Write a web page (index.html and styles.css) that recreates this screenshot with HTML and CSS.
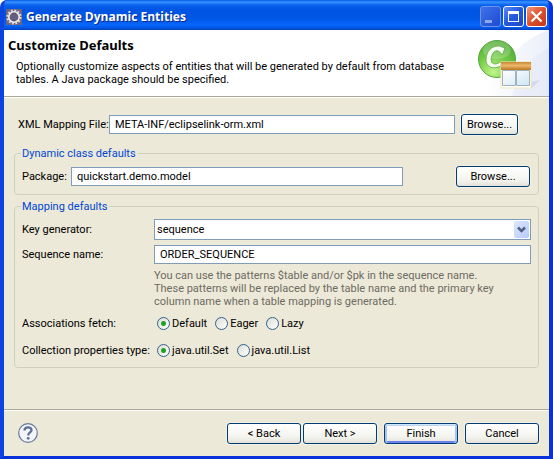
FILE: index.html
```html
<!DOCTYPE html>
<html lang="en">
<head>
<meta charset="utf-8">
<title>Generate Dynamic Entities</title>
<link rel="stylesheet" href="styles.css">
</head>
<body>
<div class="window">
  <header class="titlebar">
    <svg class="app-icon" viewBox="0 0 16 16" aria-hidden="true">
      <rect width="16" height="16" fill="#6b6284"/>
      <circle cx="8" cy="8" r="6.6" fill="none" stroke="#d4d2d2" stroke-width="2" stroke-dasharray="2 1.46"/>
      <circle cx="8" cy="8" r="5.2" fill="#5a5272" stroke="#f1efec" stroke-width="1.6"/>
      <path d="M4 8h8M4.500 6h7M4.500 10h7" stroke="#7d7694" stroke-width=".7"/>
    </svg>
    <span class="title">Generate Dynamic Entities</span>
    <button class="caption-btn minimize" type="button" aria-label="Minimize">
      <svg viewBox="0 0 21 21"><path d="M5 14h7v3H5z" fill="#8fa9ee"/></svg>
    </button>
    <button class="caption-btn" type="button" aria-label="Maximize">
      <svg viewBox="0 0 21 21"><path d="M5 5h11v11H5zM6 8v7h9V8z" fill="#fff" fill-rule="evenodd"/></svg>
    </button>
    <button class="caption-btn close" type="button" aria-label="Close">
      <svg viewBox="0 0 21 21"><path d="M5.500 5.500l10 10M15.500 5.500l-10 10" stroke="#fff" stroke-width="2.200"/></svg>
    </button>
  </header>

  <main class="client">
    <section class="banner">
      <div class="banner-text">
        <h1>Customize Defaults</h1>
        <p>Optionally customize aspects of entities that will be generated by default from database<br>tables. A Java package should be specified.</p>
      </div>
      <svg class="banner-art" viewBox="0 0 75 66" aria-hidden="true">
        <defs>
          <radialGradient id="ball" cx=".4" cy=".85" r=".9">
            <stop offset="0" stop-color="#c2f58a"/><stop offset=".5" stop-color="#74cb48"/><stop offset="1" stop-color="#4aa634"/>
          </radialGradient>
          <linearGradient id="wash" x1="0" y1="0" x2="1" y2="0">
            <stop offset="0" stop-color="#fff"/><stop offset="1" stop-color="#e3e8f7"/>
          </linearGradient>
          <linearGradient id="wood" x1="0" y1="0" x2="0" y2="1">
            <stop offset="0" stop-color="#c98632"/><stop offset=".45" stop-color="#edb868"/><stop offset="1" stop-color="#b87424"/>
          </linearGradient>
          <linearGradient id="pane" x1="0" y1="0" x2="1" y2="1">
            <stop offset="0" stop-color="#fff"/><stop offset="1" stop-color="#cfe6f5"/>
          </linearGradient>
        </defs>
        <path d="M75 0C50 8 28 30 10 66h65z" fill="url(#wash)" opacity=".7"/>
        <path d="M75 18C58 26 44 44 38 66h37z" fill="#dfe5f6" opacity=".45"/>
        <path d="M30 58L56 52 66 50 58 58z" fill="#8791b8" opacity=".2"/>
        <circle cx="23" cy="29" r="18.500" fill="url(#ball)" stroke="#58a53c"/>
        <ellipse cx="23" cy="20" rx="14" ry="9" fill="#fff" opacity=".2"/>
        <path d="M31 17L29 24L26.500 24C26 20 21 19.500 18.500 24C16 29 17 34 21 34C23 34 25 33 27 31.500V36C19 40 12 37 12 30C12 21 18 16 24 16C26 16 27.500 16.500 28.500 17.500Z" fill="#f6fff0" stroke="#5aa844" stroke-width=".8"/>
        <rect x="27" y="32" width="30" height="26" fill="#fff" stroke="#efe8b8"/>
        <rect x="27" y="32" width="30" height="8" fill="url(#wood)"/>
        <path d="M28.500 40.500h13v15h-13zM42.500 40.500h13v15h-13z" fill="url(#pane)" stroke="#9fb2bd"/>
      </svg>
    </section>

    <form class="page">
      <div class="row file-row">
        <label for="xml">XML Mapping File:</label>
        <input class="text" id="xml" type="text" value="META-INF/eclipselink-orm.xml">
        <button class="btn narrow" type="button">Browse...</button>
      </div>

      <fieldset>
        <legend>Dynamic class defaults</legend>
        <div class="row package-row">
          <label for="package">Package:</label>
          <input class="text" id="package" type="text" value="quickstart.demo.model">
          <button class="btn" type="button">Browse...</button>
        </div>
      </fieldset>

      <fieldset class="mapping">
        <legend>Mapping defaults</legend>
        <div class="grid">
          <label for="keygen">Key generator:</label>
          <div class="combo">
            <select id="keygen"><option>sequence</option></select>
            <svg class="arrow" viewBox="0 0 15 17" aria-hidden="true"><path d="M4 6.500l3.500 3.500L11 6.500" fill="none" stroke="#4d6185" stroke-width="2.500"/></svg>
          </div>
          <label class="seq" for="seq">Sequence name:</label>
          <input class="text seq" id="seq" type="text" value="ORDER_SEQUENCE">
          <p class="hint">You can use the patterns $table and/or $pk in the sequence name.<br>These patterns will be replaced by the table name and the primary key<br>column name when a table mapping is generated.</p>
          <span class="group-label" id="fetch">Associations fetch:</span>
          <div class="radios" role="radiogroup" aria-labelledby="fetch">
            <label><input type="radio" name="fetch" checked>Default</label>
            <label><input type="radio" name="fetch">Eager</label>
            <label><input type="radio" name="fetch">Lazy</label>
          </div>
          <span class="group-label" id="coll">Collection properties type:</span>
          <div class="radios" role="radiogroup" aria-labelledby="coll">
            <label><input type="radio" name="coll" checked>java.util.Set</label>
            <label><input type="radio" name="coll">java.util.List</label>
          </div>
        </div>
      </fieldset>
    </form>

    <footer class="actions">
      <button class="help" type="button" aria-label="Help">
        <svg viewBox="0 0 20 20"><circle cx="10" cy="10" r="9.300" fill="#f3f4f8" stroke="#66799c" stroke-width="1.200"/><path d="M6.500 7.500C6.500 3.300 13.500 3.300 13.500 7.200C13.500 9.500 10.200 9.500 10.200 12.500" fill="none" stroke="#5c7098" stroke-width="2.300"/><circle cx="10.200" cy="15.300" r="1.400" fill="#5c7098"/></svg>
      </button>
      <div class="pair">
        <button class="btn" type="button">&lt; Back</button>
        <button class="btn" type="button">Next &gt;</button>
      </div>
      <button class="btn default" type="button">Finish</button>
      <button class="btn" type="button">Cancel</button>
    </footer>
  </main>
</div>
</body>
</html>
```
FILE: styles.css
```css
* { box-sizing: border-box; }
body {
  margin: 0;
  min-height: 100vh;
  display: flex;
  background: #fff;
  color: #000;
  font: 11px/13px Roboto, Tahoma, sans-serif;
}
button, input, select { font: inherit; color: inherit; margin: 0; }
svg { display: block; }
h1, p { margin: 0; }

.window {
  flex: 1;
  display: flex;
  flex-direction: column;
  margin-bottom: 1px;
  border: solid;
  border-width: 0 4px 3px;
  border-color: #0a45e0 #0831d9 #0831d9 #0a45e0;
  border-radius: 7px 7px 0 0;
  background: #0054e3;
  overflow: hidden;
}
.titlebar {
  display: flex;
  align-items: center;
  gap: 2px;
  height: 30px;
  margin: 0 -4px;
  padding: 3px 6px 0;
  background: linear-gradient(#0058e6 0, #3a93ff 2px, #0a63ee 5px, #0054e3 10px, #0055e5 18px, #0566fb 25px, #0455e0 28px, #0040c0 30px);
}
.app-icon { width: 16px; height: 16px; }
.title {
  flex: 1;
  margin-left: 2px;
  color: #fff;
  font: bold 12px/16px "Open Sans", sans-serif;
  text-shadow: 1px 1px #0b2a86;
}
.caption-btn {
  width: 21px;
  height: 21px;
  padding: 0;
  border: 1px solid #fff;
  border-radius: 3px;
  background: linear-gradient(135deg, #5a8cf5, #2458dd 50%, #1c48cc);
}
.caption-btn svg { width: 21px; height: 21px; margin: -1px; }
.minimize { border-color: #6c93ee; background: linear-gradient(135deg, #3f72ea, #1c4bd0); }
.close { background: linear-gradient(135deg, #f0987c, #de4f2c 50%, #c5371a); }

.client { flex: 1; display: flex; flex-direction: column; background: #ece9d8; }
.banner {
  display: flex;
  justify-content: space-between;
  height: 67px;
  background: #fff;
  border-bottom: 1px solid #aca899;
}
.banner-text { padding: 7px 0 0 4px; white-space: nowrap; }
h1 { font: bold 13px/16px "Noto Sans", Tahoma, sans-serif; }
.banner p { margin: 7px 0 0 8px; }
.banner-art { width: 75px; height: 66px; flex: none; }

.page { flex: 1; padding: 16px 10px 0; border-top: 1px solid #fff; }
.row { display: flex; align-items: center; }
.file-row { padding: 0 21px 0 4px; }
.row label { white-space: nowrap; }
.file-row label { flex: 0 0 91px; }
.file-row .text { flex: 1; margin-right: 6px; }
.text {
  height: 19px;
  min-width: 0;
  padding: 0 5px;
  border: 1px solid #7f9db9;
  border-radius: 0;
  background: #fff;
}
.btn {
  width: 74px;
  height: 21px;
  padding: 0;
  border: 1px solid #003c74;
  border-radius: 3px;
  background: linear-gradient(#fff, #f3f3ee 70%, #e4e1d6);
  box-shadow: 0 0 0 1px #f3f1e6;
}
.narrow { width: 57px; }
.default { box-shadow: 0 0 0 1px #f3f1e6, inset 0 1px #cee7ff, inset 0 2px #bcd4f6, inset 2px 0 #a9c3f0, inset -2px 0 #a9c3f0, inset 0 -2px #6982ee; }

fieldset {
  min-width: 0;
  margin: 12px 0 0;
  padding: 6px 8px 7px 7px;
  border: 1px solid #d0d0bf;
  border-radius: 4px;
}
legend { margin-left: -1px; padding: 0 2px 0 1px; color: #0046d5; }
.package-row label { flex: 0 0 49px; }
.package-row .text { flex: 1; margin-right: 53px; }
.mapping { margin-top: 5px; padding: 6px 7px 5px 7px; }
.grid {
  display: grid;
  grid-template-columns: 132px 1fr;
  align-items: center;
}
.combo { position: relative; }
.combo select {
  display: block;
  appearance: none;
  width: 100%;
  height: 21px;
  padding: 0 20px 0 2px;
  border: 1px solid #7f9db9;
  border-radius: 0;
  background: #fff;
}
.arrow {
  position: absolute;
  top: 2px;
  right: 2px;
  width: 15px;
  height: 17px;
  border-radius: 2px;
  background: linear-gradient(135deg, #dce6fe, #b5cbfb);
  pointer-events: none;
}
.seq { margin-top: 5px; }
.hint { grid-column: 2; margin-top: 5px; color: #6d6b62; white-space: nowrap; }
.group-label { margin-top: 4px; white-space: nowrap; }
.radios { display: flex; gap: 8px; margin: 9px 0 5px 3px; }
.radios label { display: flex; align-items: center; gap: 2px; }
.radios input {
  appearance: none;
  width: 13px;
  height: 13px;
  border: 1px solid #2f628c;
  border-radius: 50%;
  background: linear-gradient(135deg, #dcdcd4, #fff);
}
.radios input:checked { background: radial-gradient(circle, #21a121 0 2px, transparent 3px), linear-gradient(135deg, #dcdcd4, #fff); }

.actions {
  display: flex;
  align-items: center;
  gap: 7px;
  height: 47px;
  padding: 0 10px 0 14px;
  border-top: 1px solid #aca899;
  box-shadow: inset 0 1px #fff;
}
.help { width: 20px; height: 20px; padding: 0; border: 0; background: none; margin-right: auto; }
.pair { display: flex; gap: 2px; }
```
